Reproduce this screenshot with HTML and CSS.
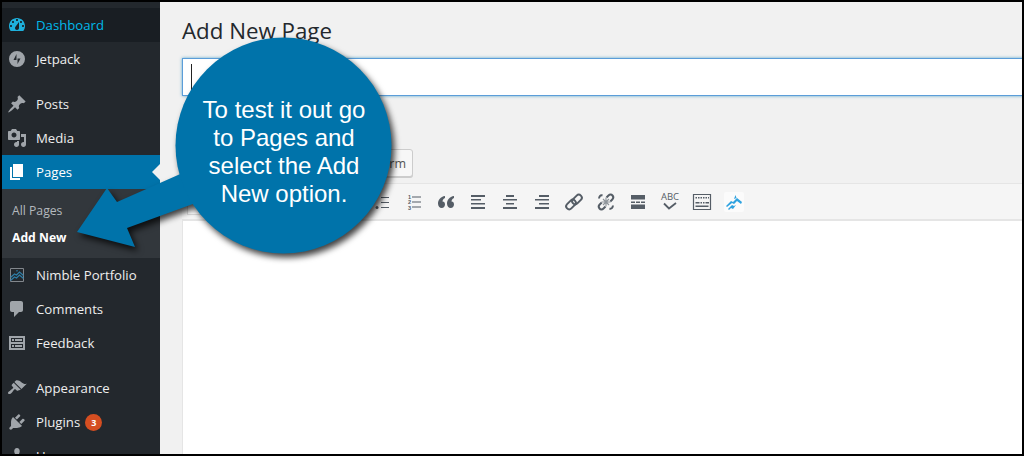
FILE: index.html
```html
<!DOCTYPE html>
<html lang="en">
<head>
<meta charset="utf-8">
<title>Add New Page</title>
<link rel="stylesheet" href="styles.css">
</head>
<body>
<div class="frame">
  <nav class="side">
    <a class="item current-dash"><svg class="ico" viewBox="0 0 20 20"><path fill-rule="evenodd" d="M3.76 16h12.48c1.1-1.37 1.76-3.11 1.76-5 0-4.42-3.58-8-8-8s-8 3.58-8 8c0 1.89.66 3.63 1.76 5zM10 4c.55 0 1 .45 1 1s-.45 1-1 1-1-.45-1-1 .45-1 1-1zM6 6c.55 0 1 .45 1 1s-.45 1-1 1-1-.45-1-1 .45-1 1-1zm8 0c.55 0 1 .45 1 1s-.45 1-1 1-1-.45-1-1 .45-1 1-1zm-5.37 5.55L12 7v6c0 1.1-.9 2-2 2s-2-.9-2-2c0-.57.24-1.08.63-1.45zM4 10c.55 0 1 .45 1 1s-.45 1-1 1-1-.45-1-1 .45-1 1-1zm12 0c.55 0 1 .45 1 1s-.45 1-1 1-1-.45-1-1 .45-1 1-1z"/></svg>Dashboard</a>
    <a class="item"><svg class="ico" viewBox="0 0 20 20"><path fill-rule="evenodd" d="M10 2a8 8 0 1 0 0 16a8 8 0 0 0 0-16zM9.500 5v6H6.500zM10.500 15V9.500h3z"/></svg>Jetpack</a>
    <div class="sep"></div>
    <a class="item"><svg class="ico" viewBox="0 0 20 20"><path d="M10.44 3.02l1.82-1.820 6.360 6.350-1.830 1.820c-1.050-.68-2.480-.57-3.410.36l-.75.75c-.92.93-1.040 2.350-.35 3.410l-1.830 1.820-2.410-2.410-2.800 2.790c-.42.42-3.380 2.710-3.800 2.290s1.860-3.390 2.280-3.810l2.790-2.790L4.100 9.360l1.830-1.820c1.050.69 2.480.57 3.400-.36l.75-.75c.93-.92 1.050-2.350.36-3.410z"/></svg>Posts</a>
    <a class="item"><svg class="ico" viewBox="0 0 20 20"><path fill-rule="evenodd" d="M13 11V4c0-.55-.45-1-1-1h-1.670L9 1H5L3.670 3H2c-.55 0-1 .45-1 1v7c0 .55.45 1 1 1h10c.55 0 1-.45 1-1zM7 4.500c1.380 0 2.500 1.120 2.500 2.500S8.380 9.500 7 9.500 4.500 8.380 4.500 7 5.620 4.500 7 4.500z"/><path d="M14 6h5v10.500c0 1.380-1.120 2.500-2.500 2.500S14 17.880 14 16.500s1.120-2.500 2.500-2.500c.17 0 .34.02.5.05V9h-3V6zm-4 8.050V13h2v3.500c0 1.380-1.120 2.500-2.500 2.500S7 17.880 7 16.500 8.120 14 9.500 14c.17 0 .34.02.5.05z"/></svg>Media</a>
    <a class="item current"><svg class="ico" viewBox="0 0 20 20"><path d="M6 15V2h10v13H6zm-1 1h8v2H3V5h2v11z"/></svg>Pages<span class="notch"></span></a>
    <div class="sub">
      <a class="sub-item">All Pages</a>
      <a class="sub-item on">Add New</a>
    </div>
    <a class="item"><svg class="ico" viewBox="0 0 20 20"><path class="nim-box" d="M3.500 3.500h13v13h-13z"/><path class="nim-line" d="M3.500 12.500l4-3.500 2 1 3-3 4 3.500M3.500 15.500l4-3.500 2 1 3-3 4 3.500"/><path class="nim-line" d="M10 6.500v-1.500"/></svg>Nimble Portfolio</a>
    <a class="item"><svg class="ico" viewBox="0 0 20 20"><path d="M5 2h9c1.100 0 2 .9 2 2v7c0 1.100-.9 2-2 2h-2l-5 5v-5H5c-1.100 0-2-.9-2-2V4c0-1.100.9-2 2-2z"/></svg>Comments</a>
    <a class="item"><svg class="ico" viewBox="0 0 20 20"><path fill-rule="evenodd" d="M2 3h16v14H2zM4 5v4h12V5zM4 11v4h12v-4z"/><path d="M5 6h2v2H5zM8 6h7v2H8zM5 12h2v2H5zM8 12h7v2H8z"/></svg>Feedback</a>
    <div class="sep"></div>
    <a class="item"><svg class="ico" viewBox="0 0 20 20"><path d="M14.480 11.060L7.410 3.990l1.500-1.500c.5-.56 2.300-.47 3.510.32 1.210.8 1.430 1.280 2.910 2.100 1.180.64 2.450 1.260 4.450.85zm-.71.71L6.700 4.700 4.930 6.470c-.39.39-.39 1.020 0 1.410l1.060 1.060c.39.39.39 1.030 0 1.420-.6.6-1.430 1.110-2.210 1.690-.35.26-.7.53-1.010.84C1.430 13.230.4 14.750 1.290 15.640c1.020 1.030 2.530-.04 3.450-.96.32-.32.58-.66.84-1.010.58-.78 1.090-1.610 1.690-2.210.39-.39 1.020-.39 1.410 0l1.060 1.060c.39.39 1.030.39 1.410 0z"/></svg>Appearance</a>
    <a class="item"><svg class="ico" viewBox="0 0 20 20"><path d="M13.110 4.360L9.870 7.600 8 5.730l3.240-3.240c.35-.34 1.050-.2 1.560.32.52.51.66 1.210.31 1.550zm-8 1.770l.91-1.120 9.010 9.010-1.190.84c-.71.71-2.630 1.160-3.820 1.160H6.140L4.900 17.260c-.59.59-1.540.59-2.120 0-.59-.58-.59-1.530 0-2.120l1.240-1.240v-3.880c0-1.130.4-3.190 1.090-3.890zm7.260 3.970l3.240-3.240c.34-.35 1.040-.21 1.550.31.52.51.66 1.210.31 1.550l-3.240 3.250z"/></svg>Plugins<span class="badge">3</span></a>
    <a class="item"><svg class="ico" viewBox="0 0 20 20"><path d="M10 9.250c-2.270 0-2.730-3.440-2.730-3.440C7 4.020 7.820 2 9.970 2c2.160 0 2.980 2.020 2.710 3.810 0 0-.41 3.440-2.680 3.440zm0 2.570L12.720 10c2.390 0 4.520 2.330 4.520 4.530v2.490s-3.650 1.130-7.240 1.130c-3.650 0-7.240-1.130-7.240-1.130v-2.490c0-2.250 1.940-4.480 4.470-4.480z"/></svg>Users</a>
  </nav>
  <main class="main">
    <h1 class="title">Add New Page</h1>
    <div class="title-input"><span class="caret"></span></div>
    <div class="media-row">
      <button class="btn btn-media">Add Media</button>
      <button class="btn btn-form">Add Form</button>
    </div>
    <div class="editor">
      <div class="toolbar">
        <span class="format"></span>
        <svg class="tool" viewBox="0 0 20 20"><path d="M9 5h8v1H9zM9 10h8v1H9zM9 15h8v1H9z"/><circle cx="5" cy="15.500" r="1.500"/></svg>
        <svg class="tool" viewBox="0 0 20 20"><path d="M8 4.500h9v1H8zM8 9.500h9v1H8zM8 14.500h9v1H8z"/><text class="num" x="4" y="6.500">1</text><text class="num" x="4" y="12">2</text><text class="num" x="4" y="17.500">3</text></svg>
        <svg class="tool" viewBox="0 0 20 20"><path d="M9 4v2C7 7 6.500 8.500 6.500 9.500c1.700 0 2.500 1.300 2.500 3s-1.300 3.500-3.300 3.500C3.500 16 2 14 2 11.500 2 8 4.500 4.500 9 4zM18 4v2c-2 1-2.500 2.500-2.500 3.500 1.700 0 2.500 1.300 2.500 3s-1.300 3.500-3.300 3.500c-2.200 0-3.700-2-3.700-4.500C11 8 13.500 4.500 18 4z"/></svg>
        <svg class="tool" viewBox="0 0 20 20"><path d="M3 3h14v2H3zM3 7h10v1.500H3zM3 11h14v1.500H3zM3 15h14v2H3z"/></svg>
        <svg class="tool" viewBox="0 0 20 20"><path d="M6 3h8v2H6zM3 7h14v1.500H3zM6 11h8v1.500H6zM3 15h14v2H3z"/></svg>
        <svg class="tool" viewBox="0 0 20 20"><path d="M7 3h10v2H7zM3 7h14v1.500H3zM7 11h10v1.500H7zM3 15h14v2H3z"/></svg>
        <svg class="tool" viewBox="0 0 20 20"><rect class="tool-line" x="1.500" y="9.500" width="11" height="6" rx="3" transform="rotate(-45 7 12.500)"/><rect class="tool-line" x="7.500" y="4.500" width="11" height="6" rx="3" transform="rotate(-45 13 7.500)"/></svg>
        <svg class="tool" viewBox="0 0 20 20"><path class="tool-line" d="M10.500 5.500l2-2c1.300-1.300 3-1.200 4 0s1.100 2.700-.2 4l-2 2M9.500 14.500l-2 2c-1.300 1.300-3 1.200-4 0s-1.100-2.700.2-4l2-2M3.500 6.500c-1-1.500 1-3.800 3-3M16.500 13.500c1 1.500-1 3.800-3 3"/><path class="tool-burst" d="M7 7l6 6M13 7l-6 6M10 5.500v9M5.500 10h9"/></svg>
        <svg class="tool" viewBox="0 0 20 20"><path d="M3 3h14v4.500H3zM3 12.500h14V17H3zM3 9.500h4V11H3zM8 9.500h4V11H8zM13 9.500h4V11h-4z"/></svg>
        <span class="spell"><span class="abc">ABC</span><svg class="check" viewBox="0 0 16 8"><path d="M2 1.500l5 5 7-5.500"/></svg></span>
        <svg class="tool" viewBox="0 0 20 20"><path class="tool-line-thin" d="M1.500 2.500h17v15h-17z"/><path d="M3.500 5h1.500v1.500H3.500zM6 5h1.500v1.500H6zM8.500 5H10v1.500H8.500zM11 5h1.500v1.500H11zM13.500 5H15v1.500h-1.500zM16 5h1v1.500h-1zM3.500 10h4v1.500h-4zM8.500 10H10v1.500H8.500zM11 10h1.500v1.500H11zM13.500 10H17v1.500h-3.500zM3.500 13.500h13V15h-13z"/></svg>
        <span class="nimble-btn"><svg class="nim-ico" viewBox="0 0 20 20"><path d="M2 14l5-5 2 1 4-4 5 4-1 2-4-3-3 3-2-1-5 4zM4 17l4-4 2 1 2-1-3 4-2-1-2 2zM10 7l1.500-4 1 3z"/></svg></span>
      </div>
      <div class="canvas"></div>
    </div>
  </main>
</div>
<svg class="callout-shape" viewBox="0 0 1024 456"><path d="M77 232L107 188L117 202L230 152L245 185L127 228L135 247Z"/><circle cx="283.500" cy="145.500" r="108"/></svg>
<div class="callout-text">To test it out go<br>to Pages and<br>select the Add<br>New option.</div>
</body>
</html>
```

FILE: styles.css
```css
* { box-sizing: border-box; }
html, body { margin: 0; height: 456px; overflow: hidden; }
body { position: relative; font-family: "Open Sans", "Noto Sans", sans-serif; }

.frame {
  display: flex;
  width: 1024px;
  height: 456px;
  border: 2px solid #000;
  background: #f1f1f1;
  overflow: hidden;
}

.side {
  flex: 0 0 158px;
  background: #23282d;
  padding-top: 6px;
  overflow: hidden;
}
.item {
  display: flex;
  align-items: center;
  height: 34px;
  padding-left: 5px;
  color: #eee;
  font-size: 13.2px;
  position: relative;
}
.ico {
  width: 20px;
  height: 20px;
  margin-right: 9px;
  fill: #a0a5aa;
  flex: none;
}
.current-dash { background: #191e23; color: #00b9eb; }
.current-dash .ico { fill: #1eb0dc; }
.current { background: #0073aa; color: #fff; }
.current .ico { fill: #fff; }
.notch {
  position: absolute;
  right: 0;
  top: 9px;
  border: 8px solid transparent;
  border-right-color: #f1f1f1;
  border-left-width: 0;
}
.sep { height: 11px; }
.sub {
  background: #32373c;
  height: 69px;
  padding: 8px 0 0 10px;
}
.sub-item {
  display: block;
  height: 27px;
  line-height: 27px;
  font-size: 12.2px;
  color: #b4b9be;
}
.sub-item.on { color: #fff; font-weight: 700; }
.nim-box { fill: none; stroke: #82878c; stroke-width: 1; }
.nim-line { fill: none; stroke: #2e7ea8; stroke-width: 1.200; }
.badge {
  width: 17px;
  height: 17px;
  margin-left: 5px;
  border-radius: 50%;
  background: #d54e21;
  color: #fff;
  font-size: 9px;
  font-weight: 700;
  line-height: 17px;
  text-align: center;
}

.main {
  flex: 1;
  min-width: 0;
  padding: 13px 0 0 22px;
  display: flex;
  flex-direction: column;
}
.title {
  margin: 0;
  font-size: 22.300px;
  font-weight: 400;
  line-height: 32px;
  color: #23282d;
}
.title-input {
  height: 38px;
  margin-top: 11px;
  margin-right: -4px;
  padding: 5px 0 0 8px;
  background: #fff;
  border: 1px solid #5b9dd9;
  box-shadow: 0 0 3px rgba(30, 140, 190, .7);
}
.caret { display: block; width: 1px; height: 28px; background: #222; }
.media-row {
  display: flex;
  gap: 8px;
  margin-top: 53px;
}
.btn {
  height: 28px;
  padding: 0 7px;
  background: #f7f7f7;
  border: 1px solid #ccc;
  border-radius: 3px;
  box-shadow: 0 1px 0 #ccc;
  color: #555;
  font: 12.500px "Open Sans", sans-serif;
}
.btn-media { width: 120px; }
.btn-form { width: 103px; padding-right: 6px; text-align: right; }
.editor { flex: 1; margin-top: 6px; display: flex; flex-direction: column; }
.toolbar {
  height: 38px;
  background: #f5f5f5;
  border-top: 1px solid #e5e5e5;
  border-bottom: 2px solid #e5e5e5;
  display: flex;
  align-items: center;
  padding-right: 278px;
  justify-content: flex-end;
  gap: 12px;
  position: relative;
}
.format {
  position: absolute;
  left: 5px;
  top: 8px;
  width: 120px;
  height: 23px;
  background: #fff;
  border: 1px solid #ddd;
}
.tool { width: 20px; height: 20px; fill: #555d66; flex: none; }
.num { font: 700 5.500px "Liberation Sans", sans-serif; fill: #555d66; }
.tool-line { fill: none; stroke: #555d66; stroke-width: 2; }
.tool-burst { fill: none; stroke: #8f959b; stroke-width: 1.200; }
.tool-line-thin { fill: none; stroke: #555d66; stroke-width: 1.200; }
.spell { width: 20px; height: 20px; display: flex; flex-direction: column; align-items: center; flex: none; }
.abc { font: 9.500px/10px "Open Sans", sans-serif; color: #555d66; }
.check { width: 16px; height: 8px; fill: none; stroke: #555d66; stroke-width: 1.800; }
.nimble-btn { width: 20px; height: 20px; background: #fbfbfb; border-radius: 2px; flex: none; }
.nim-ico { display: block; width: 20px; height: 20px; fill: #2ea2e0; }
.canvas { flex: 1; background: #fff; border-left: 1px solid #e5e5e5; }

.callout-shape {
  position: absolute;
  left: 0;
  top: 0;
  width: 1024px;
  height: 456px;
  fill: #0073aa;
  filter: drop-shadow(3px 4px 3px rgba(0, 0, 0, .75));
  pointer-events: none;
}
.callout-text {
  position: absolute;
  left: 176px;
  top: 96px;
  width: 216px;
  color: #fff;
  font: 24px/28px "Liberation Sans", Arial, sans-serif;
  text-align: center;
}
```
